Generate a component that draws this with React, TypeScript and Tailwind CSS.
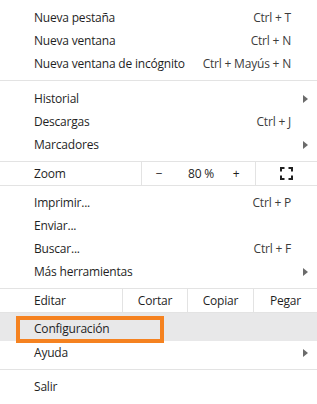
import React from "react";

type Item = { label: string; shortcut?: string; arrow?: boolean };

const Arrow = () => (
  <svg width="5" height="8" viewBox="0 0 5 8" className="absolute right-[9px] top-1/2 -translate-y-1/2">
    <path d="M0 0 L5 4 L0 8 Z" fill="#6b6b6b" />
  </svg>
);

const Row = ({ item }: { item: Item }) => (
  <div className="relative flex h-[23px] items-center justify-between pl-[34px] pr-[26px]">
    <span>{item.label}</span>
    {item.shortcut && <span className="text-[#3c3c3c]">{item.shortcut}</span>}
    {item.arrow && <Arrow />}
  </div>
);

const Sep = () => <div className="my-[5px] h-px bg-[#e3e3e3]" />;

const group1: Item[] = [
  { label: "Nueva pestaña", shortcut: "Ctrl + T" },
  { label: "Nueva ventana", shortcut: "Ctrl + N" },
  { label: "Nueva ventana de incógnito", shortcut: "Ctrl + Mayús + N" },
];
const group2: Item[] = [
  { label: "Historial", arrow: true },
  { label: "Descargas", shortcut: "Ctrl + J" },
  { label: "Marcadores", arrow: true },
];
const group3: Item[] = [
  { label: "Imprimir...", shortcut: "Ctrl + P" },
  { label: "Enviar..." },
  { label: "Buscar...", shortcut: "Ctrl + F" },
  { label: "Más herramientas", arrow: true },
];

const FullscreenIcon = () => (
  <svg width="13" height="13" viewBox="0 0 13 13" fill="none" stroke="#202020" strokeWidth="2">
    <path d="M1 4.5 V1 H4.5" />
    <path d="M8.5 1 H12 V4.5" />
    <path d="M12 8.5 V12 H8.5" />
    <path d="M4.5 12 H1 V8.5" />
  </svg>
);

export default function App() {
  return (
    <div
      className="h-[404px] w-[317px] overflow-hidden bg-white pt-[6px] text-[12px] tracking-[-0.2px] text-[#1f1f1f]"
      style={{ fontFamily: '"Open Sans", "Noto Sans", sans-serif' }}
    >
      {group1.map((i) => <Row key={i.label} item={i} />)}
      <div className="mt-[5px] mb-[6px] h-px bg-[#e3e3e3]" />
      {group2.map((i) => <Row key={i.label} item={i} />)}

      <div className="mt-[5px] flex h-[25px] border-y border-[#e3e3e3]">
        <div className="flex w-[141px] items-center pl-[34px]">Zoom</div>
        <div className="flex w-[114px] items-center border-l border-[#e3e3e3]">
          <span className="w-[34px] text-center">−</span>
          <span className="w-[50px] text-center">80 %</span>
          <span className="w-[20px] text-center">+</span>
        </div>
        <div className="flex flex-1 items-center justify-center border-l border-[#e3e3e3]">
          <FullscreenIcon />
        </div>
      </div>

      <div className="mt-[5px]" />
      {group3.map((i) => <Row key={i.label} item={i} />)}

      <div className="mt-[5px] flex h-[25px] border-y border-[#e3e3e3]">
        <div className="flex w-[122px] items-center pl-[34px]">Editar</div>
        <div className="flex w-[65px] items-center justify-center border-l border-[#e3e3e3]">Cortar</div>
        <div className="flex w-[66px] items-center justify-center border-l border-[#e3e3e3]">Copiar</div>
        <div className="flex flex-1 items-center justify-center border-l border-[#e3e3e3]">Pegar</div>
      </div>

      <div className="relative h-[28px] bg-[#e8e8e9] pt-[4px]">
        <div className="flex h-[23px] items-center pl-[34px]">Configuración</div>
        <div className="absolute left-[16px] top-[3px] h-[27px] w-[148px] border-[4px] border-[#f58220]" />
      </div>
      <Row item={{ label: "Ayuda", arrow: true }} />
      <Sep />
      <Row item={{ label: "Salir" }} />
    </div>
  );
}
